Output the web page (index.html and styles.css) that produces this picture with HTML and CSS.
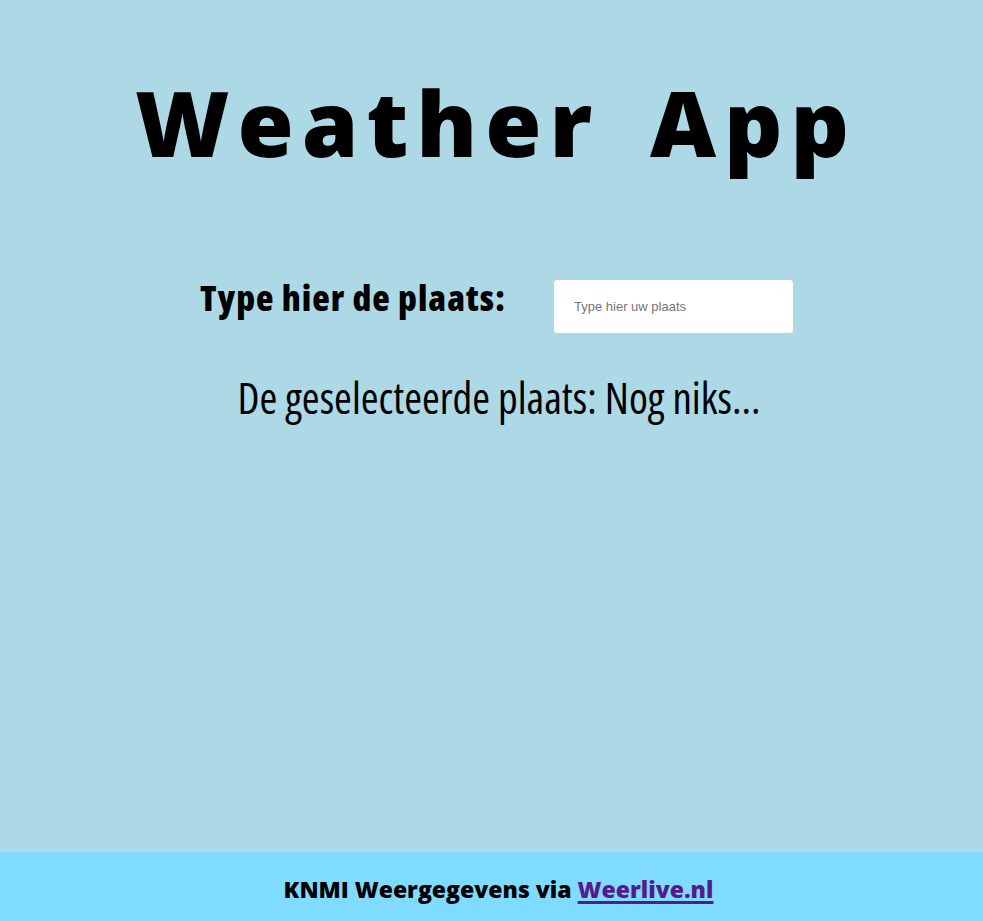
FILE: index.html
```html
<!DOCTYPE html>
<html lang="nl">
<head>
<meta charset="utf-8">
<title>Weather App</title>
<link rel="stylesheet" href="styles.css">
</head>
<body>
<main class="page">
  <h1 class="title">Weather App</h1>
  <div class="search-row">
    <label class="search-label" for="plaats">Type hier de plaats:</label>
    <input class="search-input" id="plaats" type="text" placeholder="Type hier uw plaats">
  </div>
  <h2 class="selected">De geselecteerde plaats: Nog niks...</h2>
</main>
<footer class="footer">
  <p class="footer-text">KNMI Weergegevens via <a class="footer-link" href="#">Weerlive.nl</a></p>
</footer>
</body>
</html>
```
FILE: styles.css
```css
html, body {
  margin: 0;
  padding: 0;
}

body {
  min-height: 100vh;
  display: flex;
  flex-direction: column;
  background: #add8e6;
  color: #000;
  font-family: "Open Sans", "Liberation Sans", sans-serif;
  font-stretch: 75%;
}

.page {
  flex: 1;
  display: flex;
  flex-direction: column;
  align-items: center;
  padding-left: 15px;
}

.title {
  margin: 77px 0 0 -6px;
  font-size: 91px;
  line-height: 1;
  font-weight: 800;
  font-stretch: 90%;
  letter-spacing: 8px;
  word-spacing: 18px;
}

.search-row {
  margin: 111px 4px 0 0;
  display: flex;
  align-items: flex-start;
  gap: 47px;
}

.search-label {
  margin-top: 1px;
  font-size: 36px;
  line-height: 1;
  font-weight: 800;
  font-stretch: 87.5%;
  letter-spacing: 1px;
}

.search-input {
  box-sizing: border-box;
  width: 241px;
  height: 55px;
  padding: 0 20px;
  border: 1px solid #ccc;
  border-radius: 4px;
  background: #fff;
  font-family: "Liberation Sans", Arial, sans-serif;
  font-stretch: 100%;
  font-size: 13px;
  color: #333;
}

.search-input::placeholder {
  color: #757575;
}

.selected {
  margin: 42px 0 0 0;
  font-size: 43px;
  line-height: 1;
  font-weight: 500;
}

.footer {
  height: 69px;
  box-sizing: border-box;
  padding: 26px 0 0 14px;
  background: #7fdbff;
  text-align: center;
}

.footer-text {
  margin: 0;
  font-size: 23px;
  line-height: 1;
  font-weight: 800;
  font-stretch: 100%;
}

.footer-link {
  color: #551a8b;
  text-decoration: underline;
  text-decoration-thickness: 3px;
  text-underline-offset: 3px;
}
```
